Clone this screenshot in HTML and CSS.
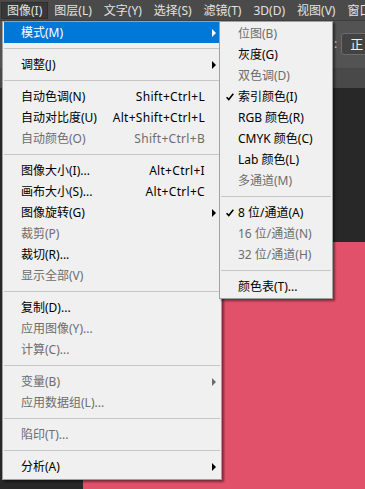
FILE: index.html
```html
<!DOCTYPE html>
<html lang="zh-CN">
<head>
<meta charset="utf-8">
<title>Photoshop 图像菜单</title>
<link rel="stylesheet" href="styles.css">
</head>
<body>
<div class="app">
  <nav class="menubar">
    <span class="mb-item active">图像(I)</span>
    <span class="mb-item">图层(L)</span>
    <span class="mb-item">文字(Y)</span>
    <span class="mb-item">选择(S)</span>
    <span class="mb-item">滤镜(T)</span>
    <span class="mb-item">3D(D)</span>
    <span class="mb-item">视图(V)</span>
    <span class="mb-item">窗口</span>
  </nav>
  <div class="options">
    <span class="colon">:</span>
    <div class="select">正</div>
  </div>
  <div class="tabs"></div>
  <div class="workspace">
    <div class="canvas"></div>
  </div>
</div>

<div class="menu main-menu">
  <div class="item hl"><span class="lbl">模式(M)</span><span class="sc"></span><span class="arr"><i class="tri"></i></span></div>
  <div class="sep"></div>
  <div class="item"><span class="lbl">调整(J)</span><span class="sc"></span><span class="arr"><i class="tri"></i></span></div>
  <div class="sep"></div>
  <div class="item"><span class="lbl">自动色调(N)</span><span class="sc">Shift+Ctrl+L</span><span class="arr"></span></div>
  <div class="item"><span class="lbl">自动对比度(U)</span><span class="sc">Alt+Shift+Ctrl+L</span><span class="arr"></span></div>
  <div class="item dis"><span class="lbl">自动颜色(O)</span><span class="sc">Shift+Ctrl+B</span><span class="arr"></span></div>
  <div class="sep"></div>
  <div class="item"><span class="lbl">图像大小(I)...</span><span class="sc">Alt+Ctrl+I</span><span class="arr"></span></div>
  <div class="item"><span class="lbl">画布大小(S)...</span><span class="sc">Alt+Ctrl+C</span><span class="arr"></span></div>
  <div class="item"><span class="lbl">图像旋转(G)</span><span class="sc"></span><span class="arr"><i class="tri"></i></span></div>
  <div class="item dis"><span class="lbl">裁剪(P)</span><span class="sc"></span><span class="arr"></span></div>
  <div class="item"><span class="lbl">裁切(R)...</span><span class="sc"></span><span class="arr"></span></div>
  <div class="item dis"><span class="lbl">显示全部(V)</span><span class="sc"></span><span class="arr"></span></div>
  <div class="sep"></div>
  <div class="item"><span class="lbl">复制(D)...</span><span class="sc"></span><span class="arr"></span></div>
  <div class="item dis"><span class="lbl">应用图像(Y)...</span><span class="sc"></span><span class="arr"></span></div>
  <div class="item dis"><span class="lbl">计算(C)...</span><span class="sc"></span><span class="arr"></span></div>
  <div class="sep"></div>
  <div class="item dis"><span class="lbl">变量(B)</span><span class="sc"></span><span class="arr"><i class="tri"></i></span></div>
  <div class="item dis"><span class="lbl">应用数据组(L)...</span><span class="sc"></span><span class="arr"></span></div>
  <div class="sep"></div>
  <div class="item dis"><span class="lbl">陷印(T)...</span><span class="sc"></span><span class="arr"></span></div>
  <div class="sep"></div>
  <div class="item"><span class="lbl">分析(A)</span><span class="sc"></span><span class="arr"><i class="tri"></i></span></div>
</div>

<div class="menu sub-menu">
  <div class="sitem dis"><span class="chk"></span><span class="lbl">位图(B)</span></div>
  <div class="sitem"><span class="chk"></span><span class="lbl">灰度(G)</span></div>
  <div class="sitem dis"><span class="chk"></span><span class="lbl">双色调(D)</span></div>
  <div class="sitem"><span class="chk"><svg width="8" height="8" viewBox="0 0 8 8"><path d="M0.6 4.2 L2.8 6.6 L7.3 0.8" fill="none" stroke="#000" stroke-width="1.6"/></svg></span><span class="lbl">索引颜色(I)</span></div>
  <div class="sitem"><span class="chk"></span><span class="lbl">RGB 颜色(R)</span></div>
  <div class="sitem"><span class="chk"></span><span class="lbl">CMYK 颜色(C)</span></div>
  <div class="sitem"><span class="chk"></span><span class="lbl">Lab 颜色(L)</span></div>
  <div class="sitem dis"><span class="chk"></span><span class="lbl">多通道(M)</span></div>
  <div class="sep"></div>
  <div class="sitem"><span class="chk"><svg width="8" height="8" viewBox="0 0 8 8"><path d="M0.6 4.2 L2.8 6.6 L7.3 0.8" fill="none" stroke="#000" stroke-width="1.6"/></svg></span><span class="lbl">8 位/通道(A)</span></div>
  <div class="sitem dis"><span class="chk"></span><span class="lbl">16 位/通道(N)</span></div>
  <div class="sitem dis"><span class="chk"></span><span class="lbl">32 位/通道(H)</span></div>
  <div class="sep"></div>
  <div class="sitem"><span class="chk"></span><span class="lbl">颜色表(T)...</span></div>
</div>
</body>
</html>
```
FILE: styles.css
```css
* { box-sizing: border-box; }
html, body {
  margin: 0;
  padding: 0;
  width: 365px;
  height: 489px;
  overflow: hidden;
  background: #282828;
  font-family: "Noto Sans", "Noto Sans CJK SC", sans-serif;
  font-size: 12px;
}
.app {
  display: flex;
  flex-direction: column;
  height: 489px;
}
.menubar {
  height: 21px;
  background: #4a4a4a;
  display: flex;
  align-items: center;
  padding-left: 1px;
  white-space: nowrap;
  flex-shrink: 0;
  border-bottom: 1px solid #3e3e3e;
}
.mb-item {
  color: #e2e2e2;
  padding: 0 6px;
  height: 17px;
  line-height: 17px;
}
.mb-item.active {
  background: #383838;
  box-shadow: inset 0 0 0 1px #2e2e2e;
}
.options {
  height: 47px;
  background: #535353;
  display: flex;
  align-items: center;
  padding-left: 334px;
  gap: 4px;
  flex-shrink: 0;
  white-space: nowrap;
}
.colon {
  color: #d6d6d6;
  font-size: 12px;
  margin-top: -2px;
}
.select {
  width: 60px;
  height: 22px;
  flex-shrink: 0;
  border: 1px solid #6c6c6c;
  border-radius: 3px;
  background: #434343;
  color: #f0f0f0;
  font-size: 13px;
  line-height: 20px;
  padding-left: 8px;
  margin-top: -2px;
}
.tabs {
  height: 20px;
  background: #494949;
  border-top: 1px solid #474747;
  flex-shrink: 0;
}
.workspace {
  flex: 1;
  background: #282828;
  padding: 154px 0 0 83px;
  display: flex;
}
.canvas {
  flex: 1;
  background: #e1516a;
}

/* dropdown menus */
.menu {
  position: absolute;
  background: #f0f0f0;
  border: 1px solid #a0a0a0;
  box-shadow: 2px 2px 2px rgba(0, 0, 0, 0.45);
  color: #000;
}
.main-menu {
  left: 2px;
  top: 21px;
  width: 220px;
  padding: 0 0 2px 0;
}
.sub-menu {
  left: 219px;
  top: 21px;
  width: 114px;
  padding: 1px 0 1px 0;
}
.item {
  display: grid;
  grid-template-columns: 1fr auto 15px;
  align-items: center;
  height: 21px;
  line-height: 20px;
  margin: 0 1px;
  padding: 1px 0 0 17px;
  white-space: nowrap;
}
.sc { letter-spacing: 0.3px; }
.item.hl {
  background: #0078d7;
  color: #fff;
}
.dis { color: #6d6d6d; }
.arr {
  display: flex;
  align-items: center;
  height: 20px;
}
.tri {
  display: block;
  width: 0;
  height: 0;
  margin-left: 7px;
  border-left: 4px solid #000;
  border-top: 4px solid transparent;
  border-bottom: 4px solid transparent;
}
.hl .tri { border-left-color: #fff; }
.dis .tri { border-left-color: #6d6d6d; }
.sep {
  height: 1px;
  margin: 5px 1px;
  background: #c6c6c6;
}
.sitem {
  display: grid;
  grid-template-columns: 17px 1fr;
  align-items: center;
  height: 21px;
  line-height: 20px;
  margin: 0 1px;
  padding-top: 1px;
  white-space: nowrap;
}
.chk {
  display: flex;
  align-items: center;
  padding-left: 5px;
  height: 20px;
}
```
